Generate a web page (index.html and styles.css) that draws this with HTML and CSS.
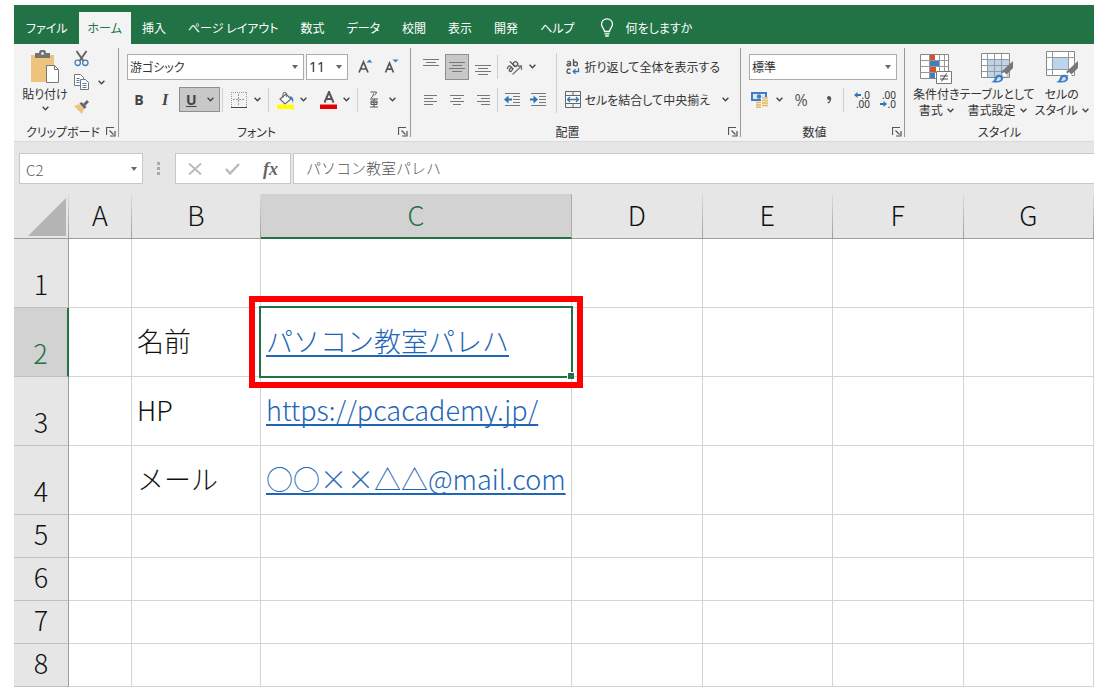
FILE: index.html
```html
<!DOCTYPE html>
<html lang="ja">
<head>
<meta charset="utf-8">
<title>Excel</title>
<link rel="stylesheet" href="styles.css">
</head>
<body>
<svg class="defs" aria-hidden="true">
  <symbol id="chev" viewBox="0 0 7 5"><path d="M.6.8 3.5 3.7 6.4.8" fill="none" stroke="#444" stroke-width="1.4"/></symbol>
  <symbol id="launch" viewBox="0 0 10 10"><path d="M.5 8V.5H8M3.5 3.5l4 4M9 4v5H4" fill="none" stroke="#555" stroke-width="1.2"/></symbol>
  <symbol id="brush" viewBox="0 0 24 24"><path d="M23 1v7l-8 8-4-4z" fill="#777"/><path d="M14 12l3 3-2 2-3-3z" fill="#fff"/><path d="M1 22c4-1 3-4 5-6 3-3 8 0 7 3-1 4-7 4-12 3z" fill="#3f7fc0"/><path d="M7 19c1-3 4-2 4 0-1 2-3 2-5 2z" fill="#cfe0f2"/></symbol>
</svg>
<div class="app">
  <nav class="tabs">
    <a class="tab file" href="#file">ファイル</a>
    <a class="tab active" href="#home" aria-current="page">ホーム</a>
    <a class="tab" href="#insert">挿入</a>
    <a class="tab" href="#layout">ページ レイアウト</a>
    <a class="tab" href="#formulas">数式</a>
    <a class="tab" href="#data">データ</a>
    <a class="tab" href="#review">校閲</a>
    <a class="tab" href="#view">表示</a>
    <a class="tab" href="#dev">開発</a>
    <a class="tab" href="#help">ヘルプ</a>
    <a class="tab tell" href="#tell"><svg width="14" height="20" viewBox="0 0 14 20" fill="none" stroke="#fff" stroke-width="1.3"><path d="M4.5 13.500C4.500 10.500 1.500 9.500 1.500 6.300a5.500 5.500 0 0 1 11 0C12.500 9.500 9.500 10.500 9.500 13.500zM4.500 15.800h5M5.200 18h3.600"/></svg>何をしますか</a>
  </nav>

  <div class="ribbon">
    <section class="group clipboard">
      <div class="content">
        <button class="big paste">
          <svg width="30" height="34" viewBox="0 0 30 34"><path d="M1 5h23v27H1z" fill="#eec37c"/><path d="M5 3h4a3.500 3.500 0 0 1 7 0h4v5H5z" fill="#737373"/><circle cx="12.500" cy="3.500" r="1.300" fill="#fff"/><path d="M16.500 15.500h8l4 4v13h-12z" fill="#fff" stroke="#777"/><path d="M24.500 15.500v4h4" fill="none" stroke="#777"/></svg>
          <span>貼り付け</span>
          <svg class="chev"><use href="#chev"/></svg>
        </button>
        <div class="stack">
          <button class="mini" aria-label="切り取り"><svg width="15" height="17" viewBox="0 0 15 17" fill="none"><path d="M2.500 1l7 10M12.500 1l-7 10" stroke="#666" stroke-width="2"/><circle cx="3.700" cy="12.800" r="2.700" stroke="#4a7ebb" stroke-width="1.300"/><circle cx="11.300" cy="12.800" r="2.700" stroke="#4a7ebb" stroke-width="1.300"/></svg></button>
          <button class="mini" aria-label="コピー"><svg width="16" height="17" viewBox="0 0 16 17" fill="#fff" stroke="#777"><path d="M.5.5h6l3 3v8h-9z"/><path d="M2.500 4.500h3m-3 2h3m-3 2h3" stroke="#4a7ebb"/><path d="M6.500 5.500h5l3 3v7h-8z"/><path d="M8.500 9.500h4m-4 2h4m-4 2h4" stroke="#4a7ebb"/></svg><svg class="chev"><use href="#chev"/></svg></button>
          <button class="mini" aria-label="書式のコピー"><svg width="16" height="14" viewBox="0 0 16 14"><path d="M0 6l5-2 5 5-2 5z" fill="#eec37c"/><path d="M5.500 3.500l2-1.500 5 5-2 2z" fill="#666"/><path d="M9 4l4-4 2 2-4 4z" fill="#666"/></svg></button>
        </div>
      </div>
      <footer class="caption"><span>クリップボード</span><button class="launcher" aria-label="クリップボードの設定"><svg><use href="#launch"/></svg></button></footer>
    </section>

    <section class="group font">
      <div class="content rows">
        <div class="row">
          <span class="combo wide"><select aria-label="フォント"><option>游ゴシック</option></select></span>
          <span class="combo size"><select aria-label="サイズ"><option>11</option></select></span>
          <button class="btn grow" aria-label="拡大"><svg width="15" height="16" viewBox="0 0 15 16"><path d="M1 13.500L5.500 3l4.500 10.500M2.800 10h5.400" fill="none" stroke="#555" stroke-width="1.700"/><path d="M8.500 3.500L11.500.500 14.500 3.500z" fill="#3f7fc0"/></svg></button>
          <button class="btn" aria-label="縮小"><svg width="15" height="16" viewBox="0 0 15 16"><path d="M1.500 13.500L5.500 4l4 9.500M3 10.200h5" fill="none" stroke="#555" stroke-width="1.700"/><path d="M8.500 .5h6L11.500 3.500z" fill="#3f7fc0"/></svg></button>
        </div>
        <div class="row">
          <button class="btn letter">B</button>
          <button class="btn letter italic">I</button>
          <button class="split on"><span class="letter under">U</span><svg class="chev"><use href="#chev"/></svg></button>
          <i class="sep"></i>
          <button class="split" aria-label="罫線"><svg width="16" height="16" viewBox="0 0 16 16" fill="none" stroke="#999"><path d="M.5 0v16M15.500 0v16M0 .5h16" stroke-dasharray="1 1"/><path d="M7.500 2v12M2 7.500h12" stroke-dasharray="2 1"/><path d="M0 15.500h16" stroke="#444"/></svg><svg class="chev"><use href="#chev"/></svg></button>
          <i class="sep"></i>
          <button class="split" aria-label="塗りつぶし"><svg width="18" height="18" viewBox="0 0 18 18"><path d="M3 8l6-5 5 5-6 5z" fill="#fff" stroke="#666" stroke-width="1.200"/><path d="M6 7V3a1.700 1.700 0 0 1 3.400 0v3" fill="none" stroke="#666"/><path d="M13 5c3 1 4 3 3 7-1-2-1-4-3-4z" fill="#3f7fc0"/><path d="M0 13.500h17V18H0z" fill="#ff0"/></svg><svg class="chev"><use href="#chev"/></svg></button>
          <button class="split" aria-label="フォントの色"><svg width="18" height="18" viewBox="0 0 18 18"><path d="M4.500 11.500L9 1l4.500 10.500M6 8h6" fill="none" stroke="#555" stroke-width="2"/><path d="M0 13.500h17V18H0z" fill="#e60000"/></svg><svg class="chev"><use href="#chev"/></svg></button>
          <i class="sep"></i>
          <button class="split" aria-label="ふりがな"><svg width="16" height="17" viewBox="0 0 16 17" fill="none" stroke="#555"><path d="M4.500 1h6q0 2-2 3M7.500 2.500q0 3-2.500 4.500M4 8h8M4 16h8M8 8v8M5 10h6v3.500H5zM5 11.700h6"/></svg><svg class="chev"><use href="#chev"/></svg></button>
        </div>
      </div>
      <footer class="caption"><span>フォント</span><button class="launcher" aria-label="フォントの設定"><svg><use href="#launch"/></svg></button></footer>
    </section>

    <section class="group align">
      <div class="content">
        <div class="rows">
          <div class="row">
            <button class="btn" aria-label="上揃え"><svg width="16" height="16" viewBox="0 0 16 16"><path d="M0 .5h16M3 3.500h10M0 6.500h16" stroke="#777"/></svg></button>
            <button class="btn on" aria-label="上下中央揃え"><svg width="16" height="16" viewBox="0 0 16 16"><path d="M0 3.500h16M3 6.500h10M0 9.500h16M3 12.500h10" stroke="#777"/></svg></button>
            <button class="btn" aria-label="下揃え"><svg width="16" height="16" viewBox="0 0 16 16"><path d="M0 6.500h16M3 9.500h10M0 12.500h16M3 15.500h10" stroke="#777"/></svg></button>
            <i class="sep"></i>
            <button class="split" aria-label="方向"><svg width="17" height="16" viewBox="0 0 17 16" fill="none" stroke="#555" stroke-width="1.300"><g transform="rotate(-45 7 7)"><path d="M1 5q3-2 4 0v4.500M5 6.800q-4-.3-4 1.500t4 .5M8 1.500v8"/><circle cx="10.200" cy="7.300" r="2.200"/></g><path d="M6.500 15.500L15 7.500M11.500 7h4v4" stroke="#777"/></svg><svg class="chev"><use href="#chev"/></svg></button>
          </div>
          <div class="row">
            <button class="btn" aria-label="左揃え"><svg width="14" height="12" viewBox="0 0 14 12"><path d="M0 1.500h13M0 4.500h9M0 7.500h13M0 10.500h9" stroke="#777"/></svg></button>
            <button class="btn" aria-label="中央揃え"><svg width="14" height="12" viewBox="0 0 14 12"><path d="M0 1.500h14M3 4.500h8M0 7.500h14M3 10.500h8" stroke="#777"/></svg></button>
            <button class="btn" aria-label="右揃え"><svg width="14" height="12" viewBox="0 0 14 12"><path d="M1 1.500h13M5 4.500h9M1 7.500h13M5 10.500h9" stroke="#777"/></svg></button>
            <i class="sep"></i>
            <button class="btn" aria-label="インデントを減らす"><svg width="16" height="14" viewBox="0 0 16 14"><path d="M1 .5h15M9 3.500h7M9 6.500h7M9 9.500h7M1 12.500h15" stroke="#777"/><path d="M0 6.500l4.500-4v3H8v2H4.500v3z" fill="#2e75b6"/></svg></button>
            <button class="btn" aria-label="インデントを増やす"><svg width="16" height="14" viewBox="0 0 16 14"><path d="M1 .5h15M9 3.500h7M9 6.500h7M9 9.500h7M1 12.500h15" stroke="#777"/><path d="M8 6.500l-4.500-4v3H0v2h3.500v3z" fill="#2e75b6"/></svg></button>
          </div>
        </div>
        <i class="sep tall"></i>
        <div class="rows">
          <div class="row"><button class="labelled"><svg width="16" height="16" viewBox="0 0 16 16" fill="none" stroke="#555" stroke-width="1.300"><path d="M2 3q3-1.500 3.500.5V7M5.500 4.500Q2 4.500 2 6t3.500.3M8.500 0v7"/><circle cx="10.500" cy="4.900" r="1.900"/><path d="M5.500 10.500q-3-1.500-3.500 1.500t3.500 2"/><path d="M13.500 9v3.500H8.500M10.500 10.300l-2.300 2.200 2.300 2.200" stroke="#2e75b6"/></svg>折り返して全体を表示する</button></div>
          <div class="row"><button class="labelled"><svg width="16" height="17" viewBox="0 0 16 17" fill="none" stroke="#666"><path d="M.5.5h15v16H.5zM.5 4.500h15M.5 12.500h15M8 .5v4M8 12.500v4"/><path d="M1 5h14v7H1z" fill="#fff" stroke="none"/><path d="M2.500 8.500h11M5 6L2.500 8.500 5 11M11 6l2.500 2.500L11 11" stroke="#2e75b6" stroke-width="1.300"/></svg>セルを結合して中央揃え<svg class="chev far"><use href="#chev"/></svg></button></div>
        </div>
      </div>
      <footer class="caption"><span>配置</span><button class="launcher" aria-label="配置の設定"><svg><use href="#launch"/></svg></button></footer>
    </section>

    <section class="group number">
      <div class="content rows">
        <div class="row"><span class="combo full"><select aria-label="表示形式"><option>標準</option></select></span></div>
        <div class="row">
          <button class="split money" aria-label="通貨"><svg width="18" height="17" viewBox="0 0 18 17"><path d="M0 1h16v9H0z" fill="#3f7fc0"/><path d="M2 3h12v5H2z" fill="#dce9f6"/><circle cx="8" cy="5.500" r="2.200" fill="#3f7fc0"/><path d="M10 6h7v10h-6v1H5v-7h5z" fill="#f3f3f3"/><path d="M11 7h6M11 9.500h6M11 12h6M11 14.500h6M5 11.500h5M5 14h5M5 16.300h5" stroke="#e8b45e" stroke-width="1.600"/></svg><svg class="chev"><use href="#chev"/></svg></button>
          <button class="btn sign">%</button>
          <button class="btn" aria-label="桁区切り"><svg width="8" height="10" viewBox="0 0 8 10"><circle cx="4" cy="3" r="2" fill="#555"/><path d="M5.600 3Q5.800 6.500 2.800 8" fill="none" stroke="#555" stroke-width="1.300"/></svg></button>
          <i class="sep"></i>
          <button class="btn dec" aria-label="小数点以下の表示桁数を増やす"><span><svg width="7" height="6" viewBox="0 0 7 6"><path d="M0 3l3.500-3v2H7v2H3.500v2z" fill="#2e75b6"/></svg>.0</span><span>.00</span></button>
          <button class="btn dec" aria-label="小数点以下の表示桁数を減らす"><span>.00</span><span><svg width="7" height="6" viewBox="0 0 7 6"><path d="M7 3L3.500 0v2H0v2h3.500v2z" fill="#2e75b6"/></svg>.0</span></button>
        </div>
      </div>
      <footer class="caption"><span>数値</span><button class="launcher" aria-label="数値の設定"><svg><use href="#launch"/></svg></button></footer>
    </section>

    <section class="group styles">
      <div class="content">
        <button class="big">
          <svg width="32" height="32" viewBox="0 0 32 32"><path d="M.5 2.500h28v24H.5z" fill="#fff" stroke="#888"/><path d="M10 3h5v6h-5zM10 15h6v6h-6z" fill="#d6532d"/><path d="M10 9h9v6h-9zM10 21h5v5h-5z" fill="#3f7fc0"/><path d="M.5 8.500h28M.5 14.500h28M.5 20.500h28M9.500 2.500v24M19.500 2.500v24M24.500 2.500v24" stroke="#999" fill="none"/><path d="M16.500 19.500h15v12h-15z" fill="#fff" stroke="#777"/><path d="M20 24h8M20 27h8M26.500 21.500l-5 8" stroke="#444"/></svg>
          <span>条件付き</span><span>書式 <svg class="chev"><use href="#chev"/></svg></span>
        </button>
        <button class="big">
          <svg width="34" height="32" viewBox="0 0 34 32"><path d="M1.500 1.500h28v24h-28z" fill="#fff" stroke="#888"/><path d="M8 8h21v17H8z" fill="#bdd5ea"/><path d="M1.500 7.500h28M1.500 13.500h28M1.500 19.500h28M7.500 1.500v24M14.500 1.500v24M21.500 1.500v24" stroke="#999" fill="none"/><use href="#brush" x="10" y="8" width="24" height="24"/></svg>
          <span>テーブルとして</span><span>書式設定 <svg class="chev"><use href="#chev"/></svg></span>
        </button>
        <button class="big">
          <svg width="34" height="34" viewBox="0 0 34 34"><path d="M1.500 1.500h28v24h-28z" fill="#fff" stroke="#888"/><path d="M8 8h15v11H8z" fill="#bdd5ea"/><path d="M1.500 7.500h28M1.500 19.500h28M7.500 1.500v24M23.500 1.500v24" stroke="#999" fill="none"/><use href="#brush" x="10" y="10" width="24" height="24"/></svg>
          <span>セルの</span><span>スタイル <svg class="chev"><use href="#chev"/></svg></span>
        </button>
      </div>
      <footer class="caption"><span>スタイル</span></footer>
    </section>
  </div>

  <div class="formula">
    <span class="combo name"><input aria-label="名前ボックス" value="C2"></span>
    <svg class="dots" width="4" height="14" viewBox="0 0 4 14" fill="#aaa"><path d="M0 0h3v3H0zM0 5h3v3H0zM0 10h3v3H0z"/></svg>
    <div class="fx">
      <button aria-label="キャンセル"><svg width="14" height="12" viewBox="0 0 14 12"><path d="M1 .5l12 11M13 .5L1 11.500" stroke="#bbb" stroke-width="2"/></svg></button>
      <button aria-label="入力"><svg width="15" height="12" viewBox="0 0 15 12"><path d="M1 6l4 4.500L14 1" fill="none" stroke="#bbb" stroke-width="2.500"/></svg></button>
      <button class="fn">fx</button>
    </div>
    <input class="value" aria-label="数式バー" value="パソコン教室パレハ">
  </div>

  <table class="sheet">
    <colgroup><col class="c-num"><col class="c-a"><col class="c-b"><col class="c-c"><col><col><col><col></colgroup>
    <thead><tr><th class="corner"><svg width="38" height="38" viewBox="0 0 38 38"><path d="M38 0v38H0z" fill="#b4b4b4"/></svg></th><th>A</th><th>B</th><th class="sel">C</th><th>D</th><th>E</th><th>F</th><th>G</th></tr></thead>
    <tbody>
      <tr class="tall"><th>1</th><td></td><td></td><td></td><td></td><td></td><td></td><td></td></tr>
      <tr class="tall"><th class="sel">2</th><td></td><td>名前</td><td class="current"><a href="#c2">パソコン教室パレハ</a><i class="outline"></i><i class="marker"></i></td><td></td><td></td><td></td><td></td></tr>
      <tr class="tall"><th>3</th><td></td><td>HP</td><td><a href="https://pcacademy.jp/">https://pcacademy.jp/</a></td><td></td><td></td><td></td><td></td></tr>
      <tr class="tall"><th>4</th><td></td><td>メール</td><td><a href="#mail">○○××△△@mail.com</a></td><td></td><td></td><td></td><td></td></tr>
      <tr><th>5</th><td></td><td></td><td></td><td></td><td></td><td></td><td></td></tr>
      <tr><th>6</th><td></td><td></td><td></td><td></td><td></td><td></td><td></td></tr>
      <tr><th>7</th><td></td><td></td><td></td><td></td><td></td><td></td><td></td></tr>
      <tr><th>8</th><td></td><td></td><td></td><td></td><td></td><td></td><td></td></tr>
    </tbody>
  </table>
</div>
</body>
</html>
```

FILE: styles.css
```css
* { box-sizing: border-box; }
body {
  margin: 0;
  padding: 5px 14px 6px;
  background: #fff;
  color: #333;
  font: 12px/16px "Noto Sans CJK JP", sans-serif;
  font-feature-settings: "palt";
}
button, input, select { font: inherit; font-feature-settings: inherit; color: inherit; }
button { border: 0; padding: 0; background: none; white-space: nowrap; }
svg { flex: none; }
.defs { position: absolute; width: 0; height: 0; }

/* Tabs */
.tabs { display: flex; height: 39px; padding: 7px 0 0; background: #217346; }
.tab { display: flex; align-items: center; padding: 0 11px 1px; color: #fff; text-decoration: none; white-space: nowrap; }
.tab.file { padding-left: 12px; }
.tab.active { padding: 0 9px 1px; background: #f3f3f3; color: #217346; }
.tell { gap: 12px; padding-left: 14px; }

/* Ribbon */
.ribbon { display: flex; min-height: 98px; background: #f3f3f3; border-bottom: 1px solid #dadada; }
.group { position: relative; display: flex; flex-direction: column; justify-content: space-between; min-width: 0; }
.group::after { content: ""; position: absolute; right: 0; top: 4px; bottom: 4px; width: 1px; background: #999; }
.group.styles::after { display: none; }
.clipboard { flex: 105 1 0; }
.font { flex: 292 1 0; }
.align { flex: 330 1 0; }
.number { flex: 164 1 0; }
.styles { flex: 189 1 0; }
.content { display: flex; padding: 9px 8px 0; }
.rows { display: flex; flex-direction: column; gap: 6px; }
.row { display: flex; align-items: center; gap: 2px; height: 27px; }
.caption { display: flex; align-items: center; gap: 4px; height: 18px; padding: 0 3px 0 0; white-space: nowrap; }
.caption span { flex: 1; text-align: center; }
.launcher { width: 10px; height: 10px; }
.launcher svg { display: block; width: 10px; height: 10px; }
.chev { width: 7px; height: 5px; }
.clipboard .content { padding: 6px 8px 0; gap: 6px; }
.clipboard .caption span { text-align: left; padding-left: 12px; }
.big { display: flex; flex-direction: column; align-items: center; }
.big span { display: flex; align-items: center; gap: 4px; }
.paste { width: 46px; }
.paste span { margin: 2px 0 4px; }
.stack { display: flex; flex-direction: column; gap: 7px; }
.mini { display: flex; align-items: center; gap: 8px; height: 17px; }
.styles .content { padding: 6px 6px 0 8px; justify-content: space-between; }
.styles .caption { padding: 0; }
.styles .big { justify-content: flex-end; }
.styles .big > svg { margin-bottom: 2px; }

.combo { position: relative; display: block; height: 26px; }
.combo::after { content: ""; position: absolute; right: 6px; top: 11px; border: 3px solid transparent; border-top: 4px solid #666; border-bottom: 0; pointer-events: none; }
.combo select, .combo input { width: 100%; height: 100%; margin: 0; padding: 0 2px; border: 1px solid #ababab; border-radius: 0; background: #fff; appearance: none; }
.combo.wide { flex: 0 1 181px; }
.combo.size { flex: 0 0 42px; }
.combo.size select { font: 14px/16px "Noto Sans", sans-serif; }
.combo.full { flex: 1; }
.btn { display: flex; align-items: center; justify-content: center; width: 24px; height: 26px; }
.btn.grow { margin-left: 4px; }
.split { display: flex; align-items: center; justify-content: space-between; width: 41px; height: 25px; padding: 0 5px 0 6px; }
.on { background: #c8c8c8; border: 1px solid #8f8f8f; }
.letter { font: bold 14px/16px "Open Sans", sans-serif; color: #444; }
.italic { font-family: "Liberation Serif", serif; font-style: italic; font-size: 16px; }
.under { text-decoration: underline; }
.sep { width: 1px; height: 24px; background: #d0d0d0; }
.sep.tall { height: 60px; margin: 0 4px 0 6px; }
.labelled { display: flex; align-items: center; gap: 4px; padding: 0 4px; }
.far { margin-left: 8px; }
.money { width: 36px; padding: 0 2px; }
.sign { width: 28px; font: 16px/16px "Open Sans", sans-serif; color: #555; }
.dec { flex-direction: column; align-items: flex-end; font: 10px/9px "Noto Sans", sans-serif; }
.dec span { display: flex; align-items: center; gap: 1px; }

/* Formula bar */
.formula { display: flex; align-items: stretch; height: 52px; padding: 11px 0 10px 5px; background: #e6e6e6; color: #555; font-size: 15px; font-weight: 300; font-feature-settings: normal; }
.combo.name { flex: 0 0 124px; height: 31px; }
.name::after { top: 14px; }
.combo.name input { padding: 2px 6px 0; border-color: #c8c8c8; }
.dots { margin: 9px 14px 0; }
.fx { display: flex; align-items: center; justify-content: space-between; width: 116px; padding: 0 12px; background: #fff; border: 1px solid #c8c8c8; }
.fn { font: italic bold 18px/20px "Liberation Serif", serif; color: #666; }
.value { flex: 1; min-width: 0; margin: 0 0 0 2px; padding: 0 12px 2px; border: 1px solid #c8c8c8; border-right: 0; background: #fff; }

/* Sheet */
.sheet { width: 100%; table-layout: fixed; border-collapse: separate; border-spacing: 0; color: #111; font-size: 27px; line-height: 36px; font-weight: 300; font-feature-settings: normal; }
.c-num { width: 55px; }
.c-a { width: 63px; }
.c-b { width: 129px; }
.c-c { width: 311px; }
th { padding: 0; font-weight: 300; background: #e6e6e6; }
thead th { height: 45px; padding-bottom: 3px; border-bottom: 1px solid #ababab; border-right: 1px solid; border-image: linear-gradient(#dedede, #9c9c9c) 1; }
thead .sel { padding-bottom: 2px; background: #d2d2d2; border-image: none; border-right-color: #ababab; border-bottom: 2px solid #217346; color: #217346; }
thead .corner { padding: 4px 2px 2px; text-align: right; }
.corner svg { display: block; margin-left: auto; }
tbody tr { height: 43px; }
tbody .tall { height: 69px; }
tbody th { padding-bottom: 6px; vertical-align: bottom; border-right: 1px solid #9c9c9c; border-bottom: 1px solid #c0c0c0; }
tbody .sel { background: #d2d2d2; color: #217346; border-right: 2px solid #217346; }
td { padding: 0 4px 4px 5px; white-space: nowrap; border-right: 1px solid #d4d4d4; border-bottom: 1px solid #d4d4d4; }
tbody th, tbody td { line-height: 35px; }
td a { color: #1f66b8; text-underline-offset: 3px; text-decoration-thickness: 2px; text-decoration-skip-ink: none; }
.current { position: relative; }
.outline { position: absolute; inset: -2px; border: 2px solid #217346; }
.outline::after { content: ""; position: absolute; right: -3px; bottom: -3px; width: 6px; height: 6px; background: #217346; border: 1px solid #fff; border-width: 1px 0 0 1px; }
.marker { position: absolute; inset: -12px; border: 6px solid #f00; }
```
